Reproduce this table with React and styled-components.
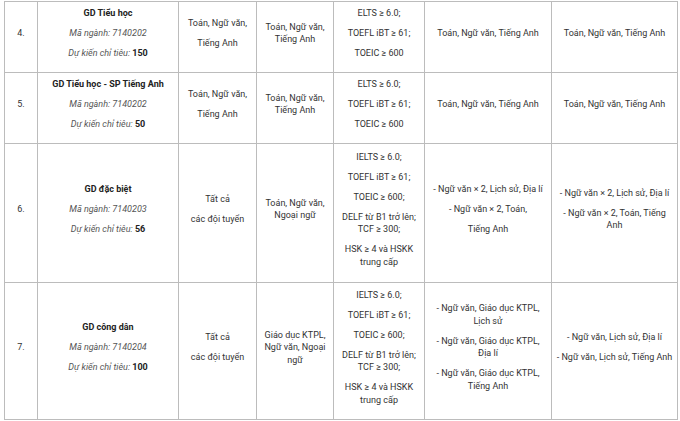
import React from 'react'
import styled, { createGlobalStyle } from 'styled-components'

const GlobalStyle = createGlobalStyle`
  html, body {
    margin: 0;
    padding: 0;
    background: #ffffff;
  }
  body {
    font-family: Roboto, "Liberation Sans", Arial, sans-serif;
    color: #333333;
  }
`;

const widths = [33, 141, 78, 77, 91, 127, 126];

const rows = [
  {
    no: '4.',
    name: 'GD Tiểu học',
    code: '7140202',
    quota: '150',
    height: 71,
    cols: [
      [['Toán, Ngữ văn,'], ['Tiếng Anh']],
      [['Toán, Ngữ văn,', 'Tiếng Anh']],
      [['ELTS ≥ 6.0;'], ['TOEFL iBT ≥ 61;'], ['TOEIC ≥ 600']],
      [['Toán, Ngữ văn, Tiếng Anh']],
      [['Toán, Ngữ văn, Tiếng Anh']],
    ],
  },
  {
    no: '5.',
    name: 'GD Tiểu học - SP Tiếng Anh',
    code: '7140202',
    quota: '50',
    height: 71,
    cols: [
      [['Toán, Ngữ văn,'], ['Tiếng Anh']],
      [['Toán, Ngữ văn,', 'Tiếng Anh']],
      [['ELTS ≥ 6.0;'], ['TOEFL iBT ≥ 61;'], ['TOEIC ≥ 600']],
      [['Toán, Ngữ văn, Tiếng Anh']],
      [['Toán, Ngữ văn, Tiếng Anh']],
    ],
  },
  {
    no: '6.',
    name: 'GD đặc biệt',
    code: '7140203',
    quota: '56',
    height: 139,
    cols: [
      [['Tất cả'], ['các đội tuyển']],
      [['Toán, Ngữ văn,', 'Ngoại ngữ']],
      [
        ['IELTS ≥ 6.0;'],
        ['TOEFL iBT ≥ 61;'],
        ['TOEIC ≥ 600;'],
        ['DELF từ B1 trở lên;', 'TCF ≥ 300;'],
        ['HSK ≥ 4 và HSKK', 'trung cấp'],
      ],
      [['- Ngữ văn × 2, Lịch sử, Địa lí'], ['- Ngữ văn × 2, Toán,'], ['Tiếng Anh']],
      [['- Ngữ văn × 2, Lịch sử, Địa lí'], ['- Ngữ văn × 2, Toán, Tiếng', 'Anh']],
    ],
  },
  {
    no: '7.',
    name: 'GD công dân',
    code: '7140204',
    quota: '100',
    height: 137,
    cols: [
      [['Tất cả'], ['các đội tuyển']],
      [['Giáo dục KTPL,', 'Ngữ văn, Ngoại', 'ngữ']],
      [
        ['IELTS ≥ 6.0;'],
        ['TOEFL iBT ≥ 61;'],
        ['TOEIC ≥ 600;'],
        ['DELF từ B1 trở lên;', 'TCF ≥ 300;'],
        ['HSK ≥ 4 và HSKK', 'trung cấp'],
      ],
      [
        ['- Ngữ văn, Giáo dục KTPL,', 'Lịch sử'],
        ['- Ngữ văn, Giáo dục KTPL,', 'Địa lí'],
        ['- Ngữ văn, Giáo dục KTPL,', 'Tiếng Anh'],
      ],
      [['- Ngữ văn, Lịch sử, Địa lí'], ['- Ngữ văn, Lịch sử, Tiếng Anh']],
    ],
  },
];

function Paras({ paras }) {
  return paras.map((lines, i) => (
    <Para key={i}>
      {lines.map((line, j) => (
        <React.Fragment key={j}>
          {j > 0 && <br />}
          {line}
        </React.Fragment>
      ))}
    </Para>
  ));
}

function App() {
  return (
    <Page>
      <GlobalStyle />
      <Table>
        <colgroup>
          {widths.map((w, i) => (
            <col key={i} style={{ width: w }} />
          ))}
        </colgroup>
        <tbody>
          {rows.map((row) => (
            <Row key={row.no} $h={row.height}>
              <Cell>
                <Para>{row.no}</Para>
              </Cell>
              <Cell>
                <Para><Name>{row.name}</Name></Para>
                <Para><Meta>Mã ngành: {row.code}</Meta></Para>
                <Para><Meta>Dự kiến chỉ tiêu:</Meta> <Quota>{row.quota}</Quota></Para>
              </Cell>
              {row.cols.map((paras, i) => (
                <Cell key={i}>
                  <Paras paras={paras} />
                </Cell>
              ))}
            </Row>
          ))}
        </tbody>
      </Table>
    </Page>
  );
}

const Page = styled.div`
  padding: 1px 0 0 4px;
  width: 680px;
  height: 421px;
  box-sizing: border-box;
  overflow: hidden;
`;

const Table = styled.table`
  border-collapse: collapse;
  table-layout: fixed;
  width: 673px;
  font-size: 9px;
  line-height: 12.5px;
`;

const Row = styled.tr`
  height: ${(p) => p.$h}px;
`;

const Cell = styled.td`
  border: 1px solid #bcbcbc;
  padding: 0 3px;
  text-align: center;
  vertical-align: middle;
  white-space: nowrap;
`;

const Para = styled.p`
  margin: 0 0 7.5px;
`;

const Name = styled.strong`
  font-weight: 700;
  color: #222222;
`;

const Meta = styled.em`
  font-style: italic;
  color: #555555;
`;

const Quota = styled.strong`
  font-weight: 700;
  color: #222222;
`;

export default App;
